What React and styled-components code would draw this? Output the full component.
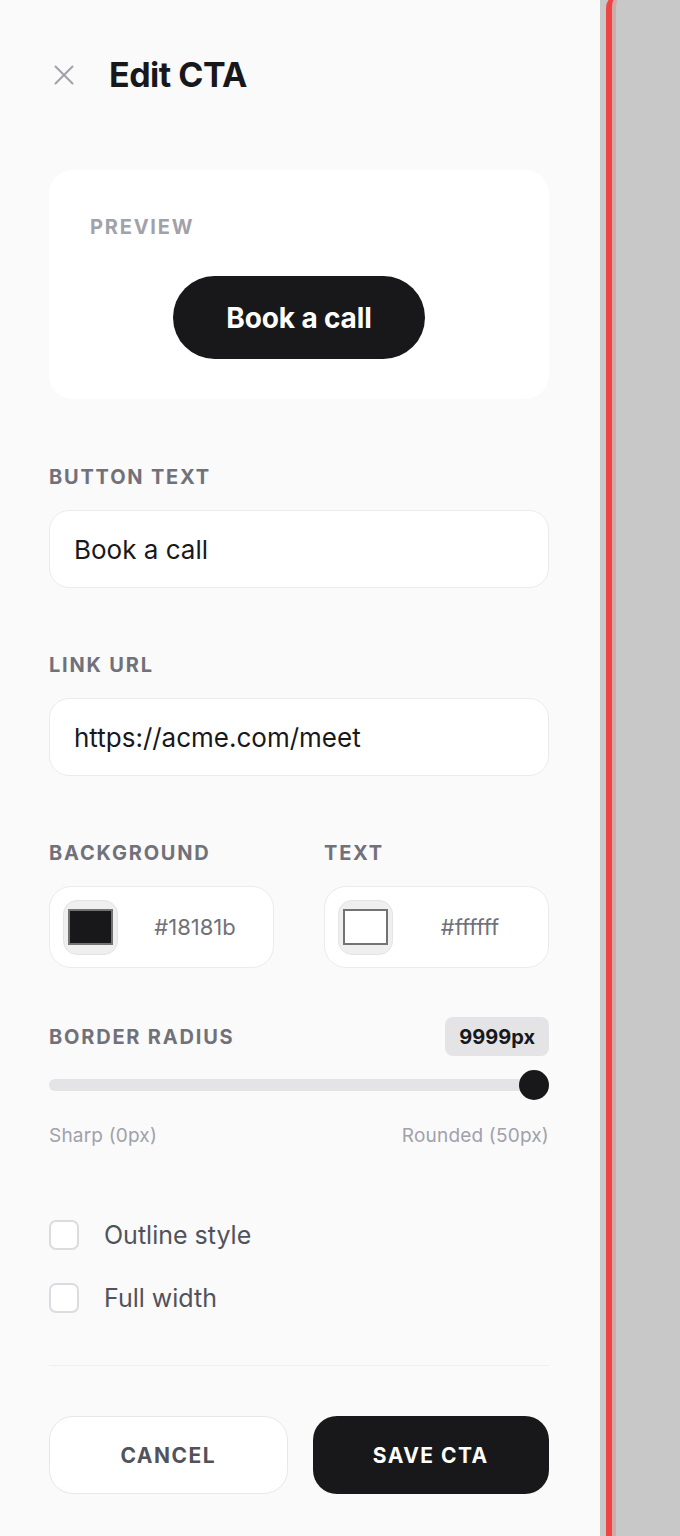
import React, { useState } from 'react';
import styled, { createGlobalStyle } from 'styled-components';

const GlobalStyle = createGlobalStyle`
  html, body {
    margin: 0;
    padding: 0;
    background: #c8c8c8;
  }
  * {
    box-sizing: border-box;
  }
  body {
    font-family: 'Inter', 'Noto Sans', sans-serif;
    -webkit-font-smoothing: antialiased;
  }
`;

const Screen = styled.div`
  display: flex;
  width: 680px;
  height: 1536px;
  overflow: hidden;
`;

const Panel = styled.aside`
  width: 600px;
  flex-shrink: 0;
  height: 100%;
  background: #fafafa;
  padding: 55px 51px 0 49px;
  display: flex;
  flex-direction: column;
`;

const Canvas = styled.div`
  flex: 1;
  background: #c8c8c8;
  padding-left: 6px;
`;

const FocusFrame = styled.div`
  height: calc(100% + 12px);
  margin-top: -6px;
  border-left: 6px solid #ef4444;
  border-top-left-radius: 14px;
  box-shadow: inset 4px 0 0 rgba(239, 68, 68, 0.22);
`;

const Header = styled.div`
  display: flex;
  align-items: center;
  height: 40px;
`;

const CloseButton = styled.button`
  width: 30px;
  height: 30px;
  padding: 0;
  margin-right: 30px;
  border: none;
  background: none;
  display: flex;
  align-items: center;
  justify-content: center;
  cursor: pointer;
`;

const Title = styled.h1`
  margin: 0;
  font-size: 34px;
  line-height: 40px;
  font-weight: 700;
  letter-spacing: -0.015em;
  color: #18181b;
`;

const PreviewCard = styled.div`
  margin-top: 75px;
  background: #ffffff;
  border-radius: 24px;
  padding: 45px 41px 40px;
  display: flex;
  flex-direction: column;
`;

const Label = styled.div`
  font-size: 20px;
  line-height: 24px;
  font-weight: 700;
  letter-spacing: 0.09em;
  text-transform: uppercase;
  color: ${p => p.$muted ? '#a1a1aa' : '#71717a'};
`;

const PreviewStage = styled.div`
  display: flex;
  justify-content: center;
  margin-top: 37px;
`;

const PreviewButton = styled.button`
  height: 83px;
  padding: 0 53px;
  border: none;
  border-radius: 9999px;
  background: #18181b;
  color: #ffffff;
  font-family: inherit;
  font-size: 28px;
  font-weight: 700;
  letter-spacing: -0.005em;
`;

const Section = styled.div`
  margin-top: ${p => p.$top}px;
  display: flex;
  flex-direction: column;
`;

const FieldLabel = styled(Label)`
  margin-bottom: 21px;
`;

const TextInput = styled.input`
  width: 100%;
  height: 78px;
  padding: 0 24px;
  border: 1.5px solid #ebebeb;
  border-radius: 20px;
  background: #ffffff;
  font-family: inherit;
  font-size: 26px;
  color: #18181b;
  outline: none;
`;

const ColorGrid = styled.div`
  display: grid;
  grid-template-columns: 1fr 1fr;
  column-gap: 50px;
`;

const ColorField = styled.div`
  display: flex;
  align-items: center;
  gap: 12px;
  height: 82px;
  padding: 0 13px;
  border: 1.5px solid #ebebeb;
  border-radius: 22px;
  background: #ffffff;
`;

const Swatch = styled.div`
  width: 55px;
  height: 55px;
  flex-shrink: 0;
  border: 1.5px solid #e4e4e7;
  border-radius: 14px;
  background: #efefef;
  display: flex;
  align-items: center;
  justify-content: center;
`;

const SwatchColor = styled.div`
  width: 45px;
  height: 36px;
  border: 2px solid #737373;
  background: ${p => p.$color};
`;

const HexValue = styled.span`
  flex: 1;
  text-align: center;
  font-size: 22px;
  color: #71717a;
`;

const RowBetween = styled.div`
  display: flex;
  align-items: center;
  justify-content: space-between;
`;

const ValueBadge = styled.span`
  height: 39px;
  padding: 0 14px;
  border-radius: 8px;
  background: #e4e4e7;
  display: flex;
  align-items: center;
  font-size: 20px;
  font-weight: 700;
  color: #18181b;
`;

const SliderWrap = styled.div`
  position: relative;
  margin-top: 14px;
  height: 30px;
  display: flex;
  align-items: center;
`;

const Track = styled.div`
  width: 100%;
  height: 12px;
  border-radius: 6px;
  background: #e4e4e7;
`;

const Thumb = styled.div`
  position: absolute;
  top: 0;
  width: 30px;
  height: 30px;
  border-radius: 50%;
  background: #18181b;
`;

const RangeHints = styled(RowBetween)`
  margin-top: 25px;
  font-size: 19px;
  line-height: 22px;
  letter-spacing: 0.01em;
  color: #a1a1aa;
`;

const CheckRow = styled.label`
  display: flex;
  align-items: center;
  gap: 25px;
  margin-top: ${p => p.$top}px;
  cursor: pointer;
`;

const CheckBox = styled.span`
  width: 30px;
  height: 30px;
  flex-shrink: 0;
  border: 2px solid #dcdce0;
  border-radius: 7px;
  background: #ffffff;
`;

const CheckText = styled.span`
  font-size: 25px;
  line-height: 30px;
  color: #52525b;
`;

const Divider = styled.hr`
  margin: 52px 0 0;
  border: none;
  border-top: 1px solid #efefef;
`;

const Actions = styled.div`
  margin-top: 50px;
  display: flex;
  gap: 25px;
`;

const ActionButton = styled.button`
  flex: 1;
  height: 78px;
  border-radius: 24px;
  border: ${p => p.$primary ? 'none' : '1.5px solid #e8e8e8'};
  background: ${p => p.$primary ? '#18181b' : '#ffffff'};
  color: ${p => p.$primary ? '#ffffff' : '#52525b'};
  font-family: inherit;
  font-size: 21px;
  font-weight: 700;
  letter-spacing: 0.07em;
  text-transform: uppercase;
  cursor: pointer;
`;

const CloseIcon = () => (
  <svg width="20" height="20" viewBox="0 0 20 20" fill="none">
    <path d="M1.5 1.5 18.5 18.5M18.5 1.5 1.5 18.5" stroke="#a1a1aa" strokeWidth="2" strokeLinecap="round" />
  </svg>
);

export default function App() {
  const [cta] = useState({
    text: 'Book a call',
    url: 'https://acme.com/meet',
    background: '#18181b',
    color: '#ffffff',
    radius: 9999,
  });
  const [outline, setOutline] = useState(false);
  const [fullWidth, setFullWidth] = useState(false);

  // slider maxes out at 50px, anything above pins the thumb to the end
  const pct = Math.min(cta.radius, 50) / 50;

  return (
    <>
      <GlobalStyle />
      <Screen>
        <Panel>
          <Header>
            <CloseButton aria-label="Close">
              <CloseIcon />
            </CloseButton>
            <Title>Edit CTA</Title>
          </Header>

          <PreviewCard>
            <Label $muted>Preview</Label>
            <PreviewStage>
              <PreviewButton>{cta.text}</PreviewButton>
            </PreviewStage>
          </PreviewCard>

          <Section $top={66}>
            <FieldLabel>Button text</FieldLabel>
            <TextInput defaultValue={cta.text} />
          </Section>

          <Section $top={65}>
            <FieldLabel>Link URL</FieldLabel>
            <TextInput defaultValue={cta.url} />
          </Section>

          <Section $top={65}>
            <ColorGrid>
              <FieldLabel>Background</FieldLabel>
              <FieldLabel>Text</FieldLabel>
              <ColorField>
                <Swatch><SwatchColor $color={cta.background} /></Swatch>
                <HexValue>{cta.background}</HexValue>
              </ColorField>
              <ColorField>
                <Swatch><SwatchColor $color={cta.color} /></Swatch>
                <HexValue>{cta.color}</HexValue>
              </ColorField>
            </ColorGrid>
          </Section>

          <Section $top={49}>
            <RowBetween>
              <Label>Border radius</Label>
              <ValueBadge>{cta.radius}px</ValueBadge>
            </RowBetween>
            <SliderWrap>
              <Track />
              <Thumb style={{ left: `calc(${pct * 100}% - ${pct * 30}px)` }} />
            </SliderWrap>
            <RangeHints>
              <span>Sharp (0px)</span>
              <span>Rounded (50px)</span>
            </RangeHints>
          </Section>

          <CheckRow $top={73} onClick={() => setOutline(!outline)}>
            <CheckBox />
            <CheckText>Outline style</CheckText>
          </CheckRow>
          <CheckRow $top={33} onClick={() => setFullWidth(!fullWidth)}>
            <CheckBox />
            <CheckText>Full width</CheckText>
          </CheckRow>

          <Divider />

          <Actions>
            <ActionButton>Cancel</ActionButton>
            <ActionButton $primary>Save CTA</ActionButton>
          </Actions>
        </Panel>
        <Canvas>
          <FocusFrame />
        </Canvas>
      </Screen>
    </>
  );
}
